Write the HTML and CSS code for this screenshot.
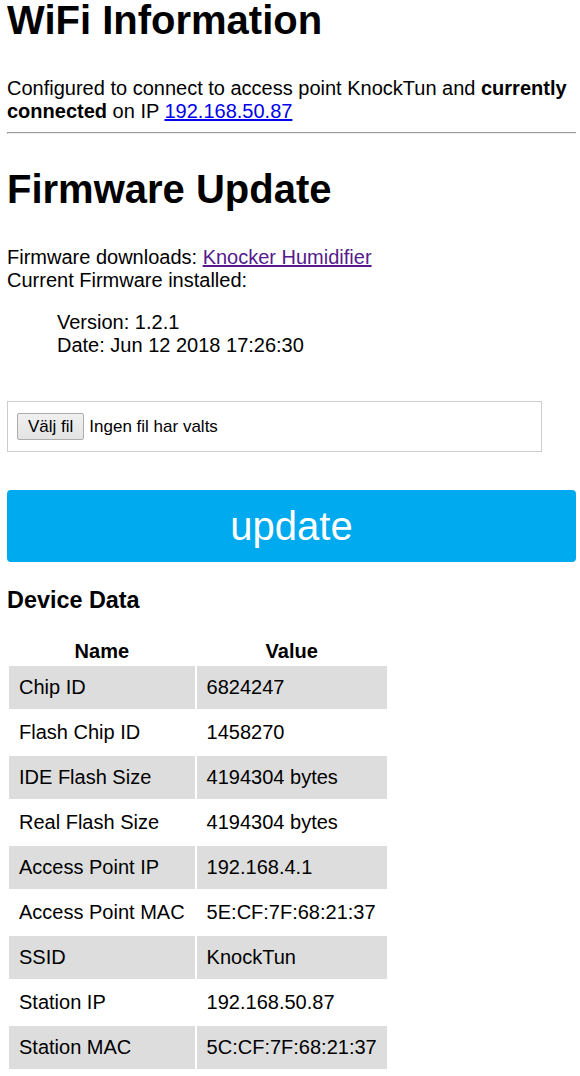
FILE: index.html
```html
<!DOCTYPE html>
<html lang="sv">
<head>
<meta charset="utf-8">
<title>Knocker Humidifier</title>
<link rel="stylesheet" href="styles.css">
</head>
<body>
<h1 class="title">WiFi Information</h1>
<p class="info">Configured to connect to access point KnockTun and <b>currently connected</b> on IP <a href="#" class="link">192.168.50.87</a></p>
<hr class="rule">
<h1 class="title">Firmware Update</h1>
<p class="info">Firmware downloads: <a href="#" class="link visited">Knocker Humidifier</a><br>Current Firmware installed:</p>
<p class="version">Version: 1.2.1<br>Date: Jun 12 2018 17:26:30</p>
<form class="upload">
  <div class="file-box">
    <span class="file-btn">Välj fil</span>
    <span class="file-name">Ingen fil har valts</span>
  </div>
  <div class="update">update</div>
</form>
<h3 class="section">Device Data</h3>
<table class="data">
  <thead>
    <tr><th>Name</th><th>Value</th></tr>
  </thead>
  <tbody>
    <tr class="shade"><td>Chip ID</td><td>6824247</td></tr>
    <tr><td>Flash Chip ID</td><td>1458270</td></tr>
    <tr class="shade"><td>IDE Flash Size</td><td>4194304 bytes</td></tr>
    <tr><td>Real Flash Size</td><td>4194304 bytes</td></tr>
    <tr class="shade"><td>Access Point IP</td><td>192.168.4.1</td></tr>
    <tr><td>Access Point MAC</td><td>5E:CF:7F:68:21:37</td></tr>
    <tr class="shade"><td>SSID</td><td>KnockTun</td></tr>
    <tr><td>Station IP</td><td>192.168.50.87</td></tr>
    <tr class="shade"><td>Station MAC</td><td>5C:CF:7F:68:21:37</td></tr>
  </tbody>
</table>
</body>
</html>
```

FILE: styles.css
```css
html, body {
  background: #ffffff;
}
body {
  margin: 0 4px 0 7px;
  font-family: "Liberation Sans", Arial, sans-serif;
  font-size: 20px;
  line-height: 23px;
  color: #000000;
}
.title {
  font-size: 40px;
  line-height: 40px;
  font-weight: bold;
  margin: 0 0 37px;
}
.info {
  margin: 0;
}
.link {
  color: #0000ee;
  text-decoration: underline;
}
.link.visited {
  color: #551a8b;
}
.rule {
  margin: 9px 0 35px;
  border: 0;
  border-top: 1px solid #9a9a9a;
  border-left: 1px solid #9a9a9a;
  border-bottom: 1px solid #eeeeee;
  height: 0;
}
.version {
  margin: 19px 0 0;
  padding-left: 50px;
}
.upload {
  margin: 44px 0 0;
  display: flex;
  flex-direction: column;
  gap: 38px;
}
.file-box {
  width: 535px;
  height: 51px;
  box-sizing: border-box;
  border: 1px solid #cccccc;
  display: flex;
  align-items: center;
  padding-left: 9px;
  gap: 5px;
  font-size: 17px;
}
.file-btn {
  display: inline-block;
  height: 27px;
  line-height: 25px;
  box-sizing: border-box;
  padding: 0 10px 0 10px;
  border: 1px solid #adadad;
  border-radius: 2px;
  background: linear-gradient(#f0f0f0, #e3e3e3);
  color: #000;
}
.file-name {
  color: #000;
}
.update {
  height: 72px;
  border-radius: 4px;
  background: #00aaee;
  color: #ffffff;
  font-size: 40px;
  display: flex;
  align-items: center;
  justify-content: center;
}
.section {
  font-size: 23.4px;
  line-height: 27px;
  font-weight: bold;
  margin: 25px 0 12px;
}
.data {
  border-spacing: 2px;
  border-collapse: separate;
}
.data th {
  font-weight: bold;
  padding: 12px 10px 1px;
  text-align: center;
}
.data td {
  padding: 10px;
  text-align: left;
}
.data tr.shade td {
  background: #dddddd;
}
```
